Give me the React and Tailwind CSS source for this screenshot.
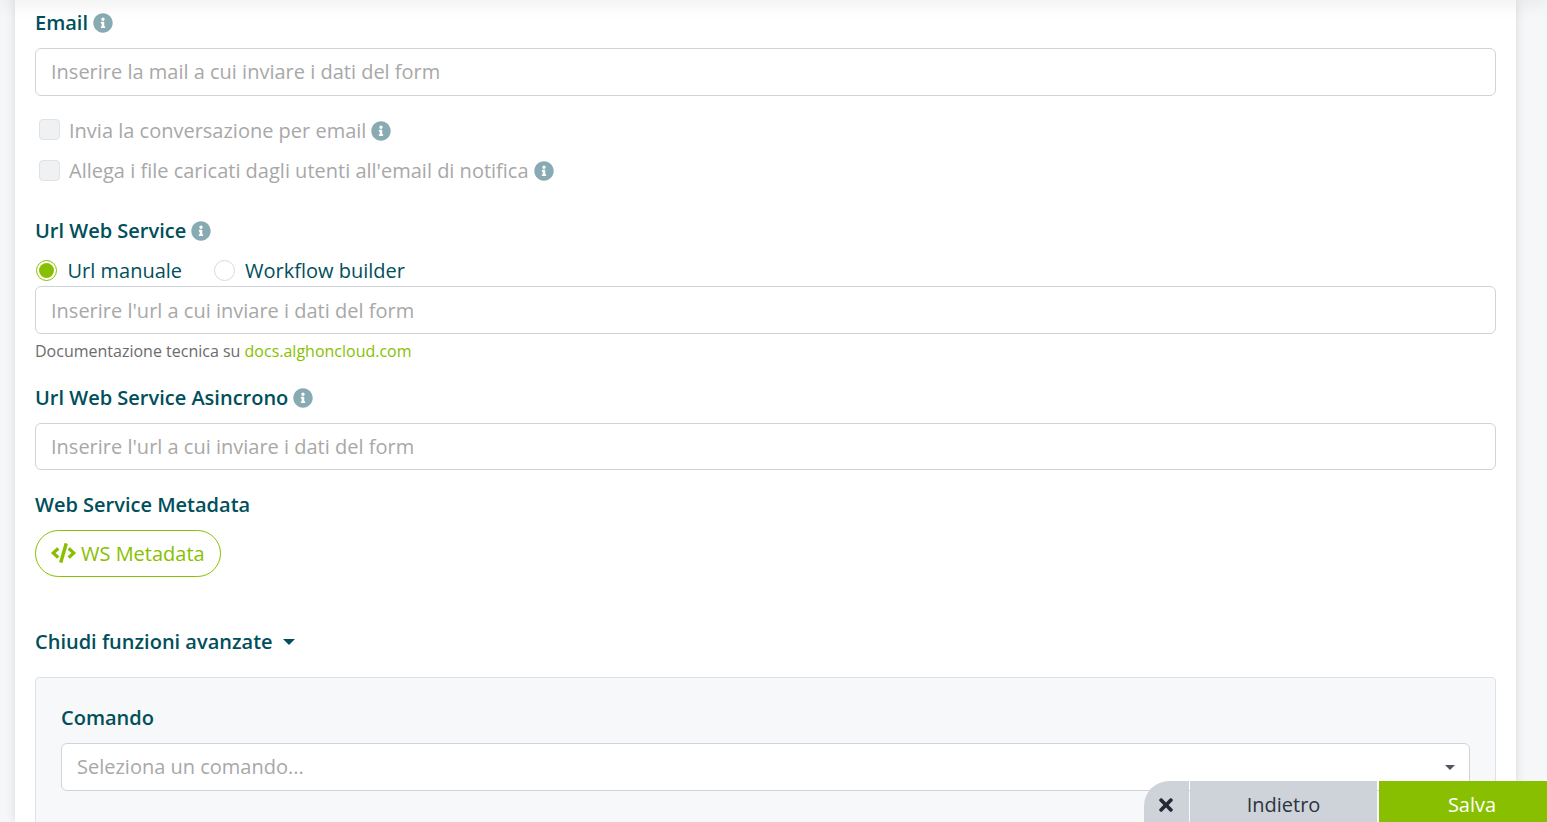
import React from 'react';

const font = { fontFamily: '"Open Sans", sans-serif' };

const InfoIcon = ({ className = '' }) => (
  <svg viewBox="0 0 512 512" className={`w-[20px] h-[20px] shrink-0 ${className}`}>
    <path
      fill="#88aab2"
      d="M256 8C119 8 8 119 8 256s111 248 248 248 248-111 248-248S393 8 256 8zm0 110c23.2 0 42 18.800 42 42s-18.800 42-42 42-42-18.800-42-42 18.800-42 42-42zm56 254c0 6.600-5.400 12-12 12h-88c-6.600 0-12-5.400-12-12v-24c0-6.600 5.400-12 12-12h12v-64h-12c-6.600 0-12-5.400-12-12v-24c0-6.600 5.400-12 12-12h64c6.600 0 12 5.400 12 12v100h12c6.600 0 12 5.400 12 12v24z"
    />
  </svg>
);

const Label = ({ children, info, className = '' }) => (
  <div className={`flex items-center gap-[5px] h-[27px] text-[20px] font-semibold text-[#004f5b] ${className}`}>
    <span>{children}</span>
    {info && <InfoIcon />}
  </div>
);

const TextInput = ({ placeholder, className = '' }) => (
  <div className={`flex items-center px-[15px] bg-white border border-[#ced4da] rounded-[6px] text-[20px] text-[#a8a8a8] ${className}`}>
    {placeholder}
  </div>
);

const DisabledCheck = ({ children, className = '', boxClass = '' }) => (
  <div className={`flex items-center h-[27px] pl-[4px] text-[20px] text-[#a8a8a8] ${className}`}>
    <span className={`w-[21px] h-[21px] rounded-[4px] bg-[#eff1f3] border border-[#dfe2e6] mr-[9px] shrink-0 ${boxClass}`} />
    <span className="mr-[5px]">{children}</span>
    <InfoIcon />
  </div>
);

const Radio = ({ checked, children, className = '' }) => (
  <div className={`flex items-center text-[20px] text-[#004f5b] ${className}`}>
    {checked ? (
      <span className="w-[21px] h-[21px] rounded-full border border-[#88bf00] flex items-center justify-center mr-[10.5px]">
        <span className="w-[15px] h-[15px] rounded-full bg-[#88bf00]" />
      </span>
    ) : (
      <span className="w-[21px] h-[21px] rounded-full border border-[#d5d9de] bg-white mr-[10.5px]" />
    )}
    {children}
  </div>
);

export default function App() {
  return (
    <div className="relative h-[822px] overflow-hidden bg-[#f6f7f9]" style={font}>
      {/* card */}
      <div className="relative ml-[15px] w-[1501px] h-[822px] bg-white px-[20px] pt-[9px] shadow-[0_0_10px_rgba(0,0,0,0.12)] overflow-hidden">
        <Label info>Email</Label>
        <TextInput placeholder="Inserire la mail a cui inviare i dati del form" className="mt-[12px] h-[48px]" />

        <DisabledCheck className="mt-[21px]" boxClass="-mt-[2px]">Invia la conversazione per email</DisabledCheck>
        <DisabledCheck className="mt-[13px]" boxClass="-mt-[1px]">Allega i file caricati dagli utenti all'email di notifica</DisabledCheck>

        <Label info className="mt-[33px]">Url Web Service</Label>
        <div className="flex items-center h-[27px] mt-[13px] pl-[1px]">
          <Radio checked className="mr-[31.5px]">Url manuale</Radio>
          <Radio>Workflow builder</Radio>
        </div>
        <TextInput placeholder="Inserire l'url a cui inviare i dati del form" className="mt-[2px] h-[48px] pt-[2px]" />
        <div className="mt-[6px] h-[22px] text-[16px] leading-[22px] text-[#6c6c6c]">
          Documentazione tecnica su <span className="text-[#88bf00]">docs.alghoncloud.com</span>
        </div>

        <Label info className="mt-[22px]">Url Web Service Asincrono</Label>
        <TextInput placeholder="Inserire l'url a cui inviare i dati del form" className="mt-[12px] h-[47px] pt-[1px]" />

        <Label className="mt-[21px]">Web Service Metadata</Label>
        <div className="mt-[12px] inline-flex items-center h-[47px] px-[15px] gap-[5px] rounded-full border border-[#88bf00] text-[20px] text-[#88bf00]">
          <svg viewBox="0 0 640 512" className="w-[25px] h-[20px] -mt-[2px]">
            <path
              fill="#88bf00"
              d="M278.900 511.500l-61-17.700c-6.400-1.800-10-8.500-8.200-14.900L346.200 8.700c1.800-6.400 8.500-10 14.900-8.200l61 17.700c6.400 1.800 10 8.500 8.200 14.900L293.800 503.300c-1.900 6.400-8.500 10.100-14.900 8.200zm-114-112.200l43.500-46.400c4.600-4.900 4.300-12.700-.8-17.200L117 256l90.600-79.700c5.100-4.500 5.500-12.300.8-17.200l-43.500-46.400c-4.500-4.800-12.100-5.100-17-.5L3.800 247.200c-5.100 4.700-5.100 12.800 0 17.500l144.100 135.100c4.900 4.600 12.500 4.400 17-.5zm327.200.6l144.100-135.100c5.100-4.700 5.100-12.800 0-17.500L492.100 112.100c-4.800-4.500-12.400-4.300-17 .5L431.600 159c-4.600 4.900-4.300 12.700.8 17.200L523 256l-90.600 79.700c-5.100 4.500-5.500 12.300-.8 17.200l43.500 46.400c4.500 4.900 12.100 5.100 17 .6z"
            />
          </svg>
          WS Metadata
        </div>

        <div className="mt-[51px] flex items-center h-[27px] text-[20px] font-semibold text-[#004f5b]">
          Chiudi funzioni avanzate
          <span className="ml-[10px] w-0 h-0 border-x-[6px] border-x-transparent border-t-[6px] border-t-[#004f5b]" />
        </div>

        {/* advanced panel */}
        <div className="mt-[22px] h-[200px] bg-[#f6f8fa] border border-[#dee2e6] rounded-[4px] px-[25px] pt-[26px]">
          <Label>Comando</Label>
          <div className="mt-[12px] h-[48px] flex items-center justify-between pl-[15px] pr-[14px] bg-white border border-[#ced4da] rounded-[6px] text-[20px] text-[#a8a8a8]">
            Seleziona un comando...
            <span className="w-0 h-0 border-x-[5px] border-x-transparent border-t-[5px] border-t-[#4f5660]" />
          </div>
        </div>
      </div>

      {/* shadow of the header scrolled out of view */}
      <div className="absolute left-0 right-0 -top-[10px] h-[10px] bg-white shadow-[0_0_20px_rgba(0,0,0,0.12)]" />

      {/* fixed action bar, runs past the bottom right of the window */}
      <div className="absolute -right-[18px] -bottom-[6px] flex h-[47px] text-[20px]">
        <div className="w-[45px] pr-[2px] flex items-center justify-center bg-[#ced3da] rounded-tl-[25px] mr-[1px]">
          <svg viewBox="0 0 352 512" className="w-[16px] h-[20px]">
            <path
              fill="#212934"
              d="M242.720 256l100.070-100.070c12.280-12.280 12.280-32.190 0-44.480l-22.240-22.240c-12.280-12.280-32.190-12.280-44.480 0L176 189.280 75.930 89.210c-12.280-12.280-32.190-12.280-44.480 0L9.210 111.450c-12.280 12.280-12.280 32.190 0 44.480L109.280 256 9.210 356.070c-12.280 12.280-12.280 32.190 0 44.480l22.240 22.240c12.280 12.280 32.200 12.280 44.480 0L176 322.720l100.070 100.070c12.280 12.280 32.200 12.280 44.480 0l22.240-22.240c12.280-12.280 12.280-32.190 0-44.480L242.720 256z"
            />
          </svg>
        </div>
        <div className="w-[187px] flex items-center justify-center bg-[#ced3da] text-[#2c3340] mr-[2px]">Indietro</div>
        <div className="w-[186px] flex items-center justify-center bg-[#88bf00] text-white">Salva</div>
      </div>
    </div>
  );
}
